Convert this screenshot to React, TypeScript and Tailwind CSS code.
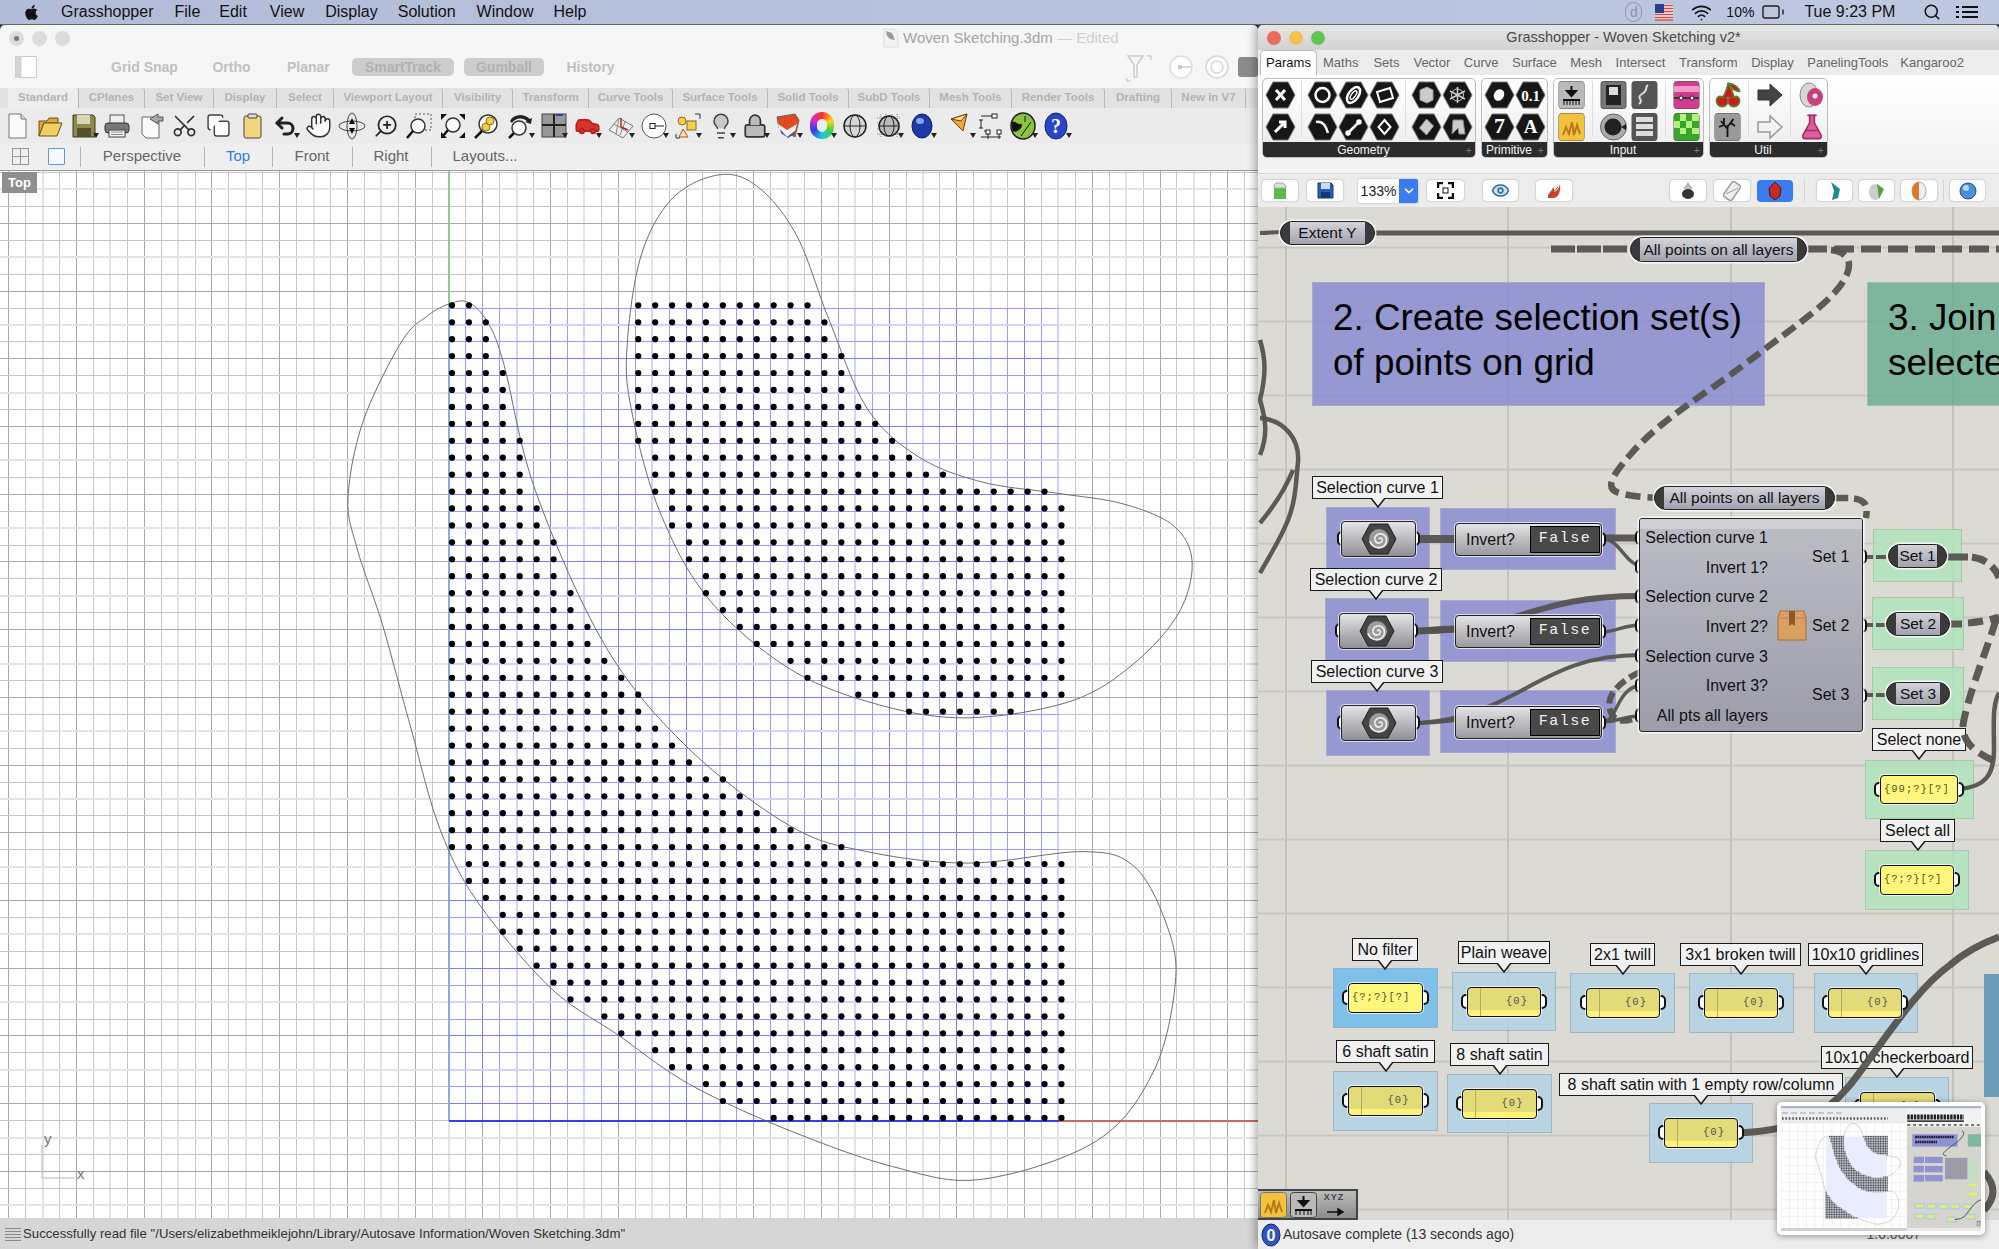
import type { ReactNode } from "react";
import { FaApple } from "react-icons/fa";
import {
  Battery,
  Car,
  Cherry,
  ChevronDown,
  Copy,
  Eye,
  FlaskConical,
  Hand,
  Lightbulb,
  Lock,
  Scissors,
  Search,
  Undo2,
  Wifi,
  ZoomIn,
} from "lucide-react";

/* ---------- viewport geometry ---------- */

type Pt = [number, number];
const SCALE = 1999 / 1568;
const STEP = 16.93;

const rawCurveA: Pt[] = [
  [352, 238.5], [367, 237], [382, 252], [395, 285], [420, 385], [475, 507], [540, 587], [620, 648], [680, 668],
  [760, 677], [850, 668], [890, 680], [915, 725], [922, 770], [905, 840], [860, 895], [770, 925],
  [700, 915], [615, 885], [540, 850], [485, 812], [432, 775], [375, 708], [345, 650], [322, 570],
  [300, 490], [280, 430], [273, 390], [285, 330], [315, 268], [335, 248],
];
const rawCurveB: Pt[] = [
  [565, 137], [595, 147], [625, 185], [650, 250], [680, 320], [720, 358], [770, 378], [830, 387],
  [880, 395], [920, 412], [935, 440], [925, 480], [890, 520], [840, 550], [760, 563], [690, 553],
  [620, 525], [556, 470], [517, 400], [495, 320], [492, 270], [503, 200], [528, 155],
];

function smooth(raw: Pt[]): Pt[] {
  const p = raw.map(([x, y]) => [x * SCALE, y * SCALE] as Pt);
  const out: Pt[] = [];
  const n = p.length;
  for (let i = 0; i < n; i++) {
    const [p0, p1, p2, p3] = [p[(i - 1 + n) % n], p[i], p[(i + 1) % n], p[(i + 2) % n]];
    for (let s = 0; s < 14; s++) {
      const t = s / 14;
      const f = (a: number, b: number, c: number, d: number) =>
        0.5 * (2 * b + (c - a) * t + (2 * a - 5 * b + 4 * c - d) * t * t + (3 * b - a - 3 * c + d) * t * t * t);
      out.push([f(p0[0], p1[0], p2[0], p3[0]), f(p0[1], p1[1], p2[1], p3[1])]);
    }
  }
  return out;
}

const curveA = smooth(rawCurveA);
const curveB = smooth(rawCurveB);
const toPoints = (c: Pt[]) => c.map(([x, y]) => `${x.toFixed(1)},${y.toFixed(1)}`).join(" ");

function inside(poly: Pt[], x: number, y: number) {
  let hit = false;
  for (let i = 0, j = poly.length - 1; i < poly.length; j = i++) {
    const [xi, yi] = poly[i];
    const [xj, yj] = poly[j];
    if (yi > y !== yj > y && x < ((xj - xi) * (y - yi)) / (yj - yi) + xi) hit = !hit;
  }
  return hit;
}

// dots inside either curve are the selection, the rest shows up in the preview thumbnail
const dots: Pt[] = [];
const otherDots: Pt[] = [];
for (let c = 0; c < 37; c++) {
  for (let r = 0; r < 49; r++) {
    const x = 452 + c * STEP;
    const y = 305.3 + r * STEP;
    if (inside(curveA, x, y) || inside(curveB, x, y)) dots.push([x, y]);
    else otherDots.push([x, y]);
  }
}

const range = (a: number, b: number) => Array.from({ length: b - a + 1 }, (_, i) => a + i);
const mod4 = (n: number) => ((n % 4) + 4) % 4;

function Viewport() {
  const gray = ["#e3e3e3", "#c6c6c6", "#a9a9a9", "#c6c6c6"];
  const blue = ["#d2d2ff", "#9c9cff", "#7c7cf6", "#9c9cff"];
  return (
    <svg className="block h-full w-full" viewBox="0 171 1258 1047">
      <rect x="0" y="171" width="1258" height="1047" fill="#ffffff" />
      <g shapeRendering="crispEdges">
        {range(-27, 48).map((k) => {
          const m = mod4(k);
          return <line key={k} x1={449 + k * STEP} x2={449 + k * STEP} y1="171" y2="1218" stroke={gray[m]} strokeWidth={m === 0 ? 2 : 1} />;
        })}
        {range(-8, 54).map((j) => {
          const m = mod4(j - 1);
          return <line key={j} y1={308 + j * STEP} y2={308 + j * STEP} x1="0" x2="1258" stroke={gray[m]} strokeWidth={m === 0 ? 2 : 1} />;
        })}
        {range(0, 36).map((k) => {
          const m = mod4(k);
          return <line key={k} x1={449 + k * STEP} x2={449 + k * STEP} y1="308" y2="1121" stroke={blue[m]} strokeWidth={m === 0 ? 2 : 1} />;
        })}
        {range(0, 48).map((j) => {
          const m = mod4(j - 1);
          return <line key={j} y1={308 + j * STEP} y2={308 + j * STEP} x1="449" x2="1058.5" stroke={blue[m]} strokeWidth={m === 0 ? 2 : 1} />;
        })}
        <line x1="449" x2="449" y1="171" y2="304" stroke="#8fca8f" strokeWidth="2" />
        <line x1="449" x2="449" y1="304" y2="1121" stroke="#8fa9dc" strokeWidth="2" />
        <line x1="449" x2="1059" y1="1121" y2="1121" stroke="#3a3aee" strokeWidth="1.5" />
        <line x1="1059" x2="1258" y1="1121" y2="1121" stroke="#c96a6a" strokeWidth="1.5" />
      </g>
      <polygon points={toPoints(curveA)} fill="none" stroke="#6d6d6d" strokeWidth="1" />
      <polygon points={toPoints(curveB)} fill="none" stroke="#6d6d6d" strokeWidth="1" />
      {dots.map(([x, y]) => (
        <circle key={`${x}-${y}`} cx={x} cy={y} r="3.1" fill="#000" />
      ))}
      {/* world axes icon */}
      <path d="M42 1145V1178H74" fill="none" stroke="#cdcdcd" strokeWidth="1.5" />
      <text x="44" y="1144" fontSize="15" fill="#777" fontFamily="Liberation Sans, sans-serif">y</text>
      <text x="77" y="1179" fontSize="15" fill="#777" fontFamily="Liberation Sans, sans-serif">x</text>
    </svg>
  );
}

/* ---------- rhino toolbar icons ---------- */

function Drop() {
  return <span className="absolute bottom-[5px] right-[2px] h-0 w-0 border-x-[3.5px] border-t-[5px] border-x-transparent border-t-[#222]" />;
}

function Tool({ children, drop, cls }: { children: ReactNode; drop?: boolean; cls?: string }) {
  return (
    <div className={`relative flex h-[35px] w-[33.55px] shrink-0 items-center justify-center ${cls ?? ""}`}>
      {children}
      {drop && <Drop />}
    </div>
  );
}

const S = ({ children }: { children: ReactNode }) => (
  <svg width="28" height="28" viewBox="0 0 28 28">{children}</svg>
);

const rhinoTools: { icon: ReactNode; drop?: boolean; cls?: string }[] = [
  { icon: <S><path d="M6 2h12l5 5v19H6z" fill="#fafafa" stroke="#777" /><path d="M18 2v5h5" fill="#ddd" stroke="#777" /></S> },
  { icon: <S><path d="M3 9h8l2-3h9v5H8L3 24z" fill="#d9a93c" stroke="#6b5212" /><path d="M8 11h18l-5 13H3z" fill="#f2cf62" stroke="#6b5212" /></S> },
  { icon: <S><path d="M3 3h20l2 2v20H3z" fill="#8d8a4c" stroke="#3c3a18" /><rect x="7" y="3" width="13" height="9" fill="#d7d6b5" /><rect x="7" y="16" width="14" height="9" fill="#55522a" /></S>, drop: true },
  { icon: <S><rect x="7" y="3" width="14" height="10" fill="#eee" stroke="#555" /><rect x="2" y="11" width="24" height="10" rx="3" fill="#777" stroke="#333" /><rect x="6" y="18" width="16" height="7" fill="#f4f4f4" stroke="#444" /><path d="M8 20h12M8 22.500h12" stroke="#888" /></S> },
  { icon: <S><path d="M5 5h13l4 4v17H9l-4-4z" fill="#fafafa" stroke="#666" /><path d="M13 7l8-5v3h5v4h-5v3z" fill="#aaa" stroke="#555" /></S> },
  { icon: <Scissors size={27} color="#333" strokeWidth={1.5} className="-rotate-90" /> },
  { icon: <Copy size={25} color="#444" strokeWidth={1.4} fill="#fff" /> },
  { icon: <S><rect x="6" y="4" width="17" height="22" rx="2" fill="#f4d57f" stroke="#444" /><rect x="10" y="2" width="9" height="4" rx="1" fill="#ddd" stroke="#444" /></S> },
  { icon: <Undo2 size={24} color="#222" strokeWidth={3} />, drop: true },
  { icon: <Hand size={27} color="#333" strokeWidth={1.3} fill="#fff" /> },
  { icon: <S><ellipse cx="14" cy="14" rx="13" ry="5" fill="none" stroke="#444" /><ellipse cx="14" cy="14" rx="5" ry="13" fill="none" stroke="#444" /><path d="M14 6l-3 6h6zM14 22l-3-6h6z" fill="#111" /></S> },
  { icon: <ZoomIn size={26} color="#222" strokeWidth={1.6} className="-scale-x-100" /> },
  { icon: <S><rect x="10" y="2" width="16" height="16" fill="none" stroke="#555" strokeDasharray="2 2" /><circle cx="13" cy="14" r="7" fill="#fff" stroke="#333" strokeWidth="1.5" /><path d="M8 19l-6 7" stroke="#111" strokeWidth="2.500" /></S> },
  { icon: <S><circle cx="14" cy="13" r="7" fill="#fff" stroke="#333" strokeWidth="1.5" /><path d="M9 18l-5 6" stroke="#111" strokeWidth="2.500" /><path d="M2 2h6L2 8zM26 2h-6l6 6zM26 26h-6l6-6zM2 26h6l-6-6z" fill="#111" /></S> },
  { icon: <S><circle cx="16" cy="12" r="9" fill="#fff" stroke="#333" strokeWidth="1.5" /><circle cx="14" cy="15" r="4" fill="#f2d04e" stroke="#8a6d12" /><circle cx="18" cy="9" r="4" fill="#f2d04e" stroke="#8a6d12" /><path d="M10 19l-7 7" stroke="#111" strokeWidth="2.500" /></S> },
  { icon: <S><circle cx="13" cy="16" r="7" fill="#fff" stroke="#333" strokeWidth="1.5" /><path d="M8 21l-5 5" stroke="#111" strokeWidth="2.500" /><path d="M4 9c4-7 13-8 20-2l2-1-1 6-6-2 2-1C16 5 9 6 6 11z" fill="#222" /></S>, drop: true },
  { icon: <S><rect x="2" y="2" width="24" height="23" fill="#999" stroke="#444" /><path d="M14 2v23M2 13h24" stroke="#222" strokeWidth="2" /><rect x="16" y="2" width="7" height="2" fill="#2a3bbb" /></S>, drop: true },
  { icon: <Car size={27} color="#b8201c" fill="#d6352e" strokeWidth={1.4} />, drop: true },
  { icon: <S><path d="M2 18L12 6l14 8-10 12z" fill="#eee" stroke="#777" /><path d="M7 12l14 8M12 6l-3 16M18 10l-5 13" stroke="#888" /><path d="M14 15V6M14 15l7 3" stroke="#b22" strokeWidth="1.5" /></S>, drop: true },
  { icon: <S><circle cx="14" cy="14" r="12" fill="#fff" stroke="#555" /><rect x="10" y="11.500" width="5" height="5" fill="#fff" stroke="#222" /><path d="M15 14h9" stroke="#222" /></S>, drop: true },
  { icon: <S><circle cx="8" cy="9" r="4" fill="#f5d04c" stroke="#8a6d12" /><rect x="13" y="9" width="9" height="9" fill="#f5d04c" stroke="#8a6d12" /><path d="M9 17l5 8H5z" fill="#f6e0b0" stroke="#b3521c" /><path d="M21 2h5v5M2 22v4h4" fill="none" stroke="#333" /></S>, drop: true },
  { icon: <Lightbulb size={28} color="#444" fill="#c8c8c8" strokeWidth={1.3} />, drop: true },
  { icon: <Lock size={26} color="#333" fill="#bbb" strokeWidth={1.6} />, drop: true },
  { icon: <S><path d="M3 5l18-3 4 6-4 17L5 16z" fill="#e04a20" stroke="#666" /><path d="M4 12l9 6 10-6-2 7-8 6-8-7z" fill="#f4f4f4" /><path d="M6 17l7 8 8-6-1 3-6 4-7-5z" fill="#2d4fb5" /></S>, drop: true },
  { icon: <div className="relative h-[27px] w-[24px] rounded-full bg-[conic-gradient(#ff2d2d,#ffd21f,#3fd23f,#22c8e6,#2d3fe0,#d02dd0,#ff2d2d)]"><div className="absolute inset-[7px] rounded-full bg-[#ececec]" /></div>, drop: true },
  { icon: <S><circle cx="14" cy="14" r="11" fill="#d6d6d6" stroke="#222" strokeWidth="1.500" /><ellipse cx="14" cy="14" rx="5" ry="11" fill="none" stroke="#222" /><path d="M3 14h22" stroke="#222" /></S> },
  { icon: <S><path d="M2 6h24M2 11h24M2 17h24M2 22h24M6 2v24M11 2v24M17 2v24M22 2v24" stroke="#888" strokeDasharray="1 1" /><circle cx="14" cy="14" r="10" fill="#bbb" stroke="#222" strokeWidth="1.5" /><ellipse cx="14" cy="14" rx="5" ry="10" fill="none" stroke="#222" /><path d="M4 14h20" stroke="#222" /></S>, drop: true },
  { icon: <S><ellipse cx="13" cy="14" rx="10" ry="12" fill="#1d3aa8" stroke="#0d1c5c" /><ellipse cx="11" cy="9" rx="4" ry="3" fill="#8aa3f0" /></S>, drop: true },
  { icon: <S><path d="M4 7l16-5-4 17z" fill="#f5a33a" stroke="#6b4412" /><path d="M4 7l10 2 6-7z" fill="#fde0a0" stroke="#6b4412" /></S>, drop: true, cls: "ml-[5px]" },
  { icon: <S><rect x="16" y="2" width="5" height="4" fill="#fff" stroke="#222" /><path d="M16 4H5M5 8v8M3 8h4M3 16h4M8 19h4v4" fill="none" stroke="#222" /><rect x="10" y="18" width="4" height="4" fill="#fff" stroke="#222" /><rect x="21" y="18" width="4" height="4" fill="#fff" stroke="#222" /><path d="M12 22v5M23 22v5M5 25h20" stroke="#222" /></S>, cls: "-ml-[5px]" },
  { icon: <S><ellipse cx="14" cy="14" rx="12" ry="13" fill="#8ac43f" stroke="#222" strokeWidth="1.5" /><path d="M3 10c5 0 6 4 9 2 2 3-3 8-8 7zM12 24l10-14M16 4v6" fill="#111" stroke="#111" /></S>, drop: true },
  { icon: <S><ellipse cx="13" cy="14" rx="11" ry="13" fill="#2746c8" stroke="#14246a" /><text x="13" y="21" textAnchor="middle" fontSize="20" fontWeight="700" fill="#fff" fontFamily="Liberation Serif, serif">?</text></S>, drop: true },
];

const rhinoTabs = [
  { label: "Standard", w: "w-[71px] bg-[#ededed]" },
  { label: "CPlanes", w: "w-[66px]" },
  { label: "Set View", w: "w-[69px]" },
  { label: "Display", w: "w-[63px]" },
  { label: "Select", w: "w-[57px]" },
  { label: "Viewport Layout", w: "w-[109px]" },
  { label: "Visibility", w: "w-[70px]" },
  { label: "Transform", w: "w-[76px]" },
  { label: "Curve Tools", w: "w-[84px]" },
  { label: "Surface Tools", w: "w-[95px]" },
  { label: "Solid Tools", w: "w-[81px]" },
  { label: "SubD Tools", w: "w-[81px]" },
  { label: "Mesh Tools", w: "w-[82px]" },
  { label: "Render Tools", w: "w-[93px]" },
  { label: "Drafting", w: "w-[67px]" },
  { label: "New in V7", w: "w-[74px]" },
];

function RhinoWindow() {
  const sep = <span className="block h-[20px] w-px bg-[#b5b5b5]" />;
  return (
    <div className="relative flex h-full w-[1258px] shrink-0 flex-col overflow-hidden rounded-t-[5px] bg-[#f6f6f6]">
      {/* title */}
      <div className="relative flex h-[26px] shrink-0 items-center pl-[9px]">
        <span className="flex h-[15px] w-[15px] items-center justify-center rounded-full bg-[#dcdcdc]">
          <span className="h-[5px] w-[5px] rounded-full bg-[#777]" />
        </span>
        <span className="ml-[8px] h-[15px] w-[15px] rounded-full bg-[#dcdcdc]" />
        <span className="ml-[8px] h-[15px] w-[15px] rounded-full bg-[#dcdcdc]" />
        <svg className="ml-[813px]" width="16" height="20" viewBox="0 0 16 20">
          <path d="M1 1h10l4 4v14H1z" fill="#f3f3f3" stroke="#ddd" />
          <path d="M3 3l6 2 3 7-5-1-3-3z" fill="#999" />
        </svg>
        <span className="ml-[4px] whitespace-nowrap text-[15px] text-[#a3a3a3]">
          Woven Sketching.3dm <span className="text-[#cfcfcf]">— Edited</span>
        </span>
      </div>
      {/* status buttons */}
      <div className="flex h-[37px] shrink-0 items-center pb-[5px] text-[14px] font-bold text-[#c0c0c0]">
        <svg className="ml-[15px]" width="22" height="22" viewBox="0 0 22 22">
          <rect x="0.500" y="0.500" width="21" height="21" fill="#fff" stroke="#ccc" />
          <rect x="0.500" y="0.500" width="6" height="21" fill="#d4d4d4" />
        </svg>
        <span className="ml-[74px] w-[66px] whitespace-nowrap text-center">Grid Snap</span>
        <span className="ml-[35px] w-[39px] text-center">Ortho</span>
        <span className="ml-[36px] w-[42px] text-center">Planar</span>
        <span className="ml-[23px] flex h-[18px] w-[102px] items-center justify-center rounded-[5px] bg-[#cdcdcd] text-[#b2b2b2]">SmartTrack</span>
        <span className="ml-[10px] flex h-[18px] w-[80px] items-center justify-center rounded-[5px] bg-[#cdcdcd] text-[#b2b2b2]">Gumball</span>
        <span className="ml-[22px] w-[49px] text-center">History</span>
        <svg className="ml-[510px]" width="28" height="30" viewBox="0 0 28 30">
          <path d="M3 4h15l-6 9v12h-3V13z" fill="none" stroke="#ccc" strokeWidth="1.5" />
          <path d="M22 4h4v4M2 26v3h3" fill="none" stroke="#bbb" />
        </svg>
        <svg className="ml-[15px]" width="26" height="26" viewBox="0 0 26 26">
          <circle cx="13" cy="13" r="11" fill="#fff" stroke="#ddd" strokeWidth="1.5" />
          <rect x="10" y="11" width="4" height="4" fill="#ccc" />
          <path d="M14 13h9" stroke="#ccc" strokeWidth="1.5" />
        </svg>
        <svg className="ml-[10px]" width="26" height="26" viewBox="0 0 26 26">
          <circle cx="13" cy="13" r="11" fill="#fff" stroke="#d5d5d5" strokeWidth="1.5" />
          <circle cx="13" cy="13" r="6" fill="none" stroke="#d5d5d5" strokeWidth="1.5" />
        </svg>
        <span className="ml-[8px] h-[20px] w-[20px] rounded-[3px] bg-[#8c8c8c]" />
      </div>
      {/* toolbar tabs */}
      <div className="flex h-[20px] shrink-0 bg-[#e2e2e2] pl-[8px] text-[11.5px] font-bold text-[#b3b3b3]">
        {rhinoTabs.map((t) => (
          <span
            key={t.label}
            className={`flex items-center justify-center whitespace-nowrap rounded-t-[3px] border-r border-[#b9b9b9] ${t.w}`}
          >
            {t.label}
          </span>
        ))}
      </div>
      {/* icon row */}
      <div className="flex h-[35px] shrink-0 items-center bg-[#ebebeb]">
        {rhinoTools.map((t, i) => (
          <Tool key={i} drop={t.drop} cls={t.cls}>{t.icon}</Tool>
        ))}
      </div>
      {/* viewport tabs */}
      <div className="flex h-[28px] shrink-0 items-center border-b border-[#9a9a9a] bg-[#efefef] text-[15px] text-[#666]">
        <svg className="ml-[12px]" width="17" height="17" viewBox="0 0 17 17">
          <rect x="0.500" y="0.500" width="16" height="16" fill="none" stroke="#999" />
          <path d="M8.500 0v17M0 8.500h17" stroke="#999" />
        </svg>
        <span className="ml-[19px] h-[17px] w-[17px] rounded-[1px] border border-[#5a96e8] bg-[#f6f9ff]" />
        <span className="ml-[15px]">{sep}</span>
        <span className="ml-[21px] w-[80px] whitespace-nowrap text-center">Perspective</span>
        <span className="ml-[22px]">{sep}</span>
        <span className="ml-[20px] w-[26px] text-center text-[#2f7de6]">Top</span>
        <span className="ml-[21px]">{sep}</span>
        <span className="ml-[21px] w-[36px] text-center">Front</span>
        <span className="ml-[22px]">{sep}</span>
        <span className="ml-[20px] w-[36px] text-center">Right</span>
        <span className="ml-[22px]">{sep}</span>
        <span className="ml-[20px] w-[66px] whitespace-nowrap text-center">Layouts...</span>
      </div>
      {/* viewport */}
      <div className="relative h-[1047px] shrink-0">
        <Viewport />
        <span className="absolute left-[2px] top-[1px] flex h-[21px] w-[35px] items-center justify-center bg-[#8f8f8f] text-[13px] font-bold text-white">
          Top
        </span>
      </div>
      {/* command status */}
      <div className="flex flex-1 items-center bg-[#d6d6d6] text-[13.2px] text-[#333]">
        <svg className="ml-[5px] mr-[2px]" width="16" height="14" viewBox="0 0 16 14">
          <path d="M0 1.500h16M0 4.500h16M0 7.500h16M0 10.500h16M0 13.500h16" stroke="#8a8a8a" />
        </svg>
        <span className="whitespace-nowrap">
          Successfully read file "/Users/elizabethmeiklejohn/Library/Autosave Information/Woven Sketching.3dm"
        </span>
      </div>
    </div>
  );
}

/* ---------- grasshopper ribbon ---------- */

function Hex({ children }: { children?: ReactNode }) {
  return (
    <svg width="31" height="28" viewBox="0 0 31 28">
      <polygon points="8,1 23,1 30,14 23,27 8,27 1,14" fill="#161616" stroke="#777" strokeWidth="1" />
      <g fill="none" stroke="#fff" strokeWidth="2.500">{children}</g>
    </svg>
  );
}

function Sq({ children }: { children: ReactNode }) {
  return (
    <svg width="31" height="28" viewBox="0 0 31 28">
      <rect x="3" y="0.500" width="25" height="27" rx="2.500" fill="#777" stroke="#555" />
      {children}
    </svg>
  );
}

const Col = ({ children }: { children: ReactNode }) => (
  <div className="flex w-[31px] flex-col gap-[4px]">{children}</div>
);
const Sep = () => <div className="mx-[5px] h-[56px] w-px bg-[#dedede]" />;

function Section({ w, label, children }: { w: string; label: string; children: ReactNode }) {
  return (
    <div className={`flex h-[80px] shrink-0 flex-col overflow-hidden rounded-[5px] border border-[#bdbdbd] bg-linear-to-b from-[#ffffff] to-[#ebebeb] ${w}`}>
      <div className="flex flex-1 pl-[2px] pt-[2px]">{children}</div>
      <div className="relative flex h-[15px] items-center justify-center bg-[#2c2c2c] pr-[11px] text-[12px] text-[#f2f2f2]">
        {label}
        <span className="absolute right-[3px] top-[3px] text-[11px] leading-[10px] text-[#777]">+</span>
      </div>
    </div>
  );
}

const T = ({ c, s = 15 }: { c: string; s?: number }) => (
  <text x="15.500" y="20" textAnchor="middle" fontSize={s} fontWeight="700" fill="#fff" stroke="none" fontFamily="Liberation Serif, serif">{c}</text>
);

function Ribbon() {
  return (
    <div className="flex h-[86px] shrink-0 gap-[5px] bg-linear-to-b from-[#ffffff] to-[#f3f3f3] pl-[4px] pt-[3px]">
      <Section w="w-[214px]" label="Geometry">
        <Col>
          <Hex><path d="M11 9l9 10M20 9l-9 10" strokeWidth="3" /></Hex>
          <Hex><path d="M10 19l10-10M14 9h6v6" strokeWidth="3" /></Hex>
        </Col>
        <Sep />
        <Col>
          <Hex><circle cx="15.500" cy="14" r="7" /></Hex>
          <Hex><path d="M9 9c7-2 10 4 12 11" /></Hex>
        </Col>
        <Col>
          <Hex><ellipse cx="15.500" cy="14" rx="5" ry="9" transform="rotate(35 15.500 14)" /><ellipse cx="15.500" cy="14" rx="2" ry="5" transform="rotate(35 15.500 14)" strokeWidth="1.5" /></Hex>
          <Hex><path d="M10 20L21 9" /><circle cx="10" cy="20" r="1.500" /><circle cx="21" cy="9" r="1.500" /></Hex>
        </Col>
        <Col>
          <Hex><path d="M8 11l13-4 3 10-13 4z" strokeWidth="2" /></Hex>
          <Hex><path d="M15.500 7l6 7-6 7-6-7z" strokeWidth="2" /></Hex>
        </Col>
        <Sep />
        <Col>
          <Hex><path d="M9 9l7-3 6 3v10l-6 3-7-3z" fill="#ccc" stroke="#999" strokeWidth="1" /></Hex>
          <Hex><path d="M15.500 6l7 7-7 9-7-7z" fill="#ccc" stroke="#999" strokeWidth="1" /></Hex>
        </Col>
        <Col>
          <Hex><path d="M15.500 6v16M8 10l15 8M23 10L8 18" stroke="#ccc" strokeWidth="1.5" /><circle cx="15.500" cy="14" r="6" stroke="#ccc" strokeWidth="1" /></Hex>
          <Hex><path d="M11 7h10l2 14h-6l-1-6-6 6z" fill="#ccc" stroke="#888" strokeWidth="1" /></Hex>
        </Col>
      </Section>
      <Section w="w-[67px]" label="Primitive">
        <Col>
          <Hex><ellipse cx="15" cy="14" rx="5" ry="6" fill="#fff" stroke="none" transform="rotate(30 15 14)" /></Hex>
          <Hex><T c="7" s={22} /></Hex>
        </Col>
        <Col>
          <Hex><T c="0.1" s={15} /></Hex>
          <Hex><T c="A" s={19} /></Hex>
        </Col>
      </Section>
      <Section w="w-[151px]" label="Input">
        <Col>
          <Sq><rect x="3" y="0.500" width="25" height="27" rx="2.500" fill="#b9b9b9" /><path d="M15.500 5v9M11 10l4.500 5 4.500-5zM7 19h17" stroke="#111" strokeWidth="2" /><path d="M8 20v4M11 20v4M14 20v4M17 20v4M20 20v4M23 20v4" stroke="#111" /></Sq>
          <Sq><rect x="3" y="0.500" width="25" height="27" rx="2.500" fill="#f3c33e" /><path d="M7 22l3-8 3 7 3-12 2 13 3-10 3 9" fill="none" stroke="#b8791a" strokeWidth="2" /></Sq>
        </Col>
        <Sep />
        <Col>
          <Sq><rect x="8" y="4" width="15" height="20" fill="#222" /><rect x="11" y="6" width="9" height="8" fill="#ddd" /></Sq>
          <svg width="31" height="28" viewBox="0 0 31 28"><circle cx="15.500" cy="14" r="13" fill="#aaa" stroke="#666" /><circle cx="15" cy="14" r="8.500" fill="#222" /><path d="M23 14l5-3v6z" fill="#222" /></svg>
        </Col>
        <Col>
          <Sq><rect x="3" y="0.500" width="25" height="27" rx="2.500" fill="#555" /><path d="M10 23c6-4-4-6 3-10s2-6 6-9" fill="none" stroke="#ddd" strokeWidth="2" /></Sq>
          <Sq><rect x="3" y="0.500" width="25" height="27" rx="2.500" fill="#555" /><rect x="7" y="4" width="17" height="5" fill="#ddd" /><rect x="7" y="11" width="17" height="5" fill="#ddd" /><rect x="7" y="18" width="17" height="5" fill="#ddd" /></Sq>
        </Col>
        <Sep />
        <Col>
          <Sq><rect x="3" y="0.500" width="25" height="27" rx="2.500" fill="#d23c8c" /><rect x="3" y="5" width="25" height="6" fill="#f59ac6" /><path d="M3 17h25" stroke="#222" strokeWidth="1.5" /><circle cx="10" cy="17" r="2" fill="#fff" stroke="#222" /><circle cx="21" cy="17" r="2" fill="#fff" stroke="#222" /></Sq>
          <Sq><rect x="3" y="0.500" width="25" height="27" rx="2.500" fill="#3aa52c" /><rect x="9" y="1" width="6" height="7" fill="#b4f07c" /><rect x="21" y="1" width="7" height="7" fill="#b4f07c" /><rect x="15" y="8" width="6" height="7" fill="#b4f07c" /><rect x="3" y="8" width="6" height="7" fill="#b4f07c" /><rect x="9" y="15" width="6" height="6" fill="#b4f07c" /><rect x="21" y="15" width="7" height="6" fill="#b4f07c" /></Sq>
        </Col>
      </Section>
      <Section w="w-[119px]" label="Util">
        <Col>
          <div className="flex h-[28px] items-center justify-center"><Cherry size={28} color="#4c8a2a" fill="#d3161c" strokeWidth={1.4} /></div>
          <Sq><rect x="3" y="0.500" width="25" height="27" rx="2.500" fill="#9a9a9a" /><path d="M15.500 24V12M15.500 16L9 8M15.500 14l6-8M12 12L7 14M19 10l4 3M12 11V5" stroke="#111" strokeWidth="1.8" /></Sq>
        </Col>
        <Sep />
        <Col>
          <svg width="31" height="28" viewBox="0 0 31 28"><path d="M4 9h12V3l12 11-12 11v-6H4z" fill="#444" stroke="#333" /></svg>
          <svg width="31" height="28" viewBox="0 0 31 28"><path d="M4 9h12V3l12 11-12 11v-6H4z" fill="#f2f2f2" stroke="#999" strokeWidth="1.5" /></svg>
        </Col>
        <Sep />
        <Col>
          <svg width="31" height="28" viewBox="0 0 31 28"><ellipse cx="13" cy="14" rx="9" ry="12" fill="#d6d6d6" stroke="#888" /><ellipse cx="19" cy="16" rx="8" ry="9" fill="#c8407e" /><circle cx="19" cy="15" r="2.500" fill="#eee" /></svg>
          <div className="flex h-[28px] items-center justify-center"><FlaskConical size={28} color="#a03068" fill="#e05c9c" strokeWidth={1.4} /></div>
        </Col>
      </Section>
    </div>
  );
}

function GhButton({ cls, children }: { cls: string; children: ReactNode }) {
  return (
    <div className={`flex h-[21px] items-center justify-center rounded-[4px] bg-white shadow-[0_0_2px_rgba(0,0,0,0.35)] ${cls}`}>
      {children}
    </div>
  );
}

function GhToolbar() {
  return (
    <div className="flex h-[34px] shrink-0 items-center border-t border-[#d8d8d8] bg-[#ececec] text-[14px] text-[#222]">
      <GhButton cls="ml-[4px] w-[36px]">
        <svg width="14" height="18" viewBox="0 0 14 18"><path d="M1 6h12v11H1z" fill="#5cb848" /><path d="M3 1h7l3 3v2H1V3z" fill="#ddd" stroke="#aaa" /></svg>
      </GhButton>
      <GhButton cls="ml-[9px] w-[36px]">
        <svg width="17" height="17" viewBox="0 0 17 17"><path d="M1 1h13l2 2v13H1z" fill="#2b5bb5" stroke="#163672" /><rect x="4" y="1" width="9" height="6" fill="#cdd9ef" /><rect x="4" y="10" width="9" height="6" fill="#163672" /></svg>
      </GhButton>
      <div className="ml-[15px] flex h-[24px] w-[60px] overflow-hidden rounded-[2px] bg-white shadow-[0_0_2px_rgba(0,0,0,0.3)]">
        <span className="flex-1 text-center leading-[24px]">133%</span>
        <span className="flex w-[19px] items-center justify-center bg-[#3a7bf2]">
          <ChevronDown size={14} color="#fff" strokeWidth={3} />
        </span>
      </div>
      <GhButton cls="ml-[9px] w-[37px]">
        <svg width="17" height="17" viewBox="0 0 17 17"><path d="M1 6V1h5M11 1h5v5M16 11v5h-5M6 16H1v-5" fill="none" stroke="#111" strokeWidth="2.500" /><rect x="6" y="6" width="5" height="5" fill="#fff" stroke="#111" /></svg>
      </GhButton>
      <GhButton cls="ml-[19px] w-[35px]">
        <Eye size={19} color="#2d6f9c" strokeWidth={2} fill="#cde2ee" />
      </GhButton>
      <GhButton cls="ml-[18px] w-[36px]">
        <svg width="18" height="18" viewBox="0 0 18 18"><path d="M3 16c-1-5 4-6 5-11 2 2 1 4 1 5 3-1 5-4 6-8 1 6-1 14-7 14z" fill="#d8402a" /><path d="M3 16L13 5" stroke="#555" /></svg>
      </GhButton>
      <GhButton cls="ml-[98px] w-[36px]">
        <svg width="16" height="20" viewBox="0 0 16 20"><path d="M8 1l5 7H3z" fill="#bbb" /><ellipse cx="8" cy="13" rx="6" ry="5" fill="#333" /></svg>
      </GhButton>
      <GhButton cls="ml-[8px] w-[36px]">
        <svg width="18" height="20" viewBox="0 0 18 20"><rect x="4" y="1" width="10" height="18" rx="2" transform="rotate(35 9 10)" fill="#eee" stroke="#999" strokeWidth="1.5" /><path d="M3 13L15 7" stroke="#999" /></svg>
      </GhButton>
      <div className="ml-[7px] flex h-[22px] w-[36px] items-center justify-center rounded-[4px] bg-[#3a7bf2]">
        <svg width="17" height="20" viewBox="0 0 17 20"><path d="M8 1l6 6-1 8-5 4-5-4-1-8z" fill="#c42a22" stroke="#5a100c" /></svg>
      </div>
      <span className="ml-[11px] h-[22px] w-px bg-[#d4d4d4]" />
      <GhButton cls="ml-[12px] w-[35px]">
        <svg width="16" height="20" viewBox="0 0 16 20"><path d="M4 1l9 7-2 9-6 2 2-9z" fill="#1f8a95" /></svg>
      </GhButton>
      <GhButton cls="ml-[7px] w-[35px]">
        <svg width="18" height="20" viewBox="0 0 18 20"><ellipse cx="7" cy="11" rx="6" ry="8" fill="#ccc" /><path d="M9 3l7 5-5 10z" fill="#57a13c" /></svg>
      </GhButton>
      <GhButton cls="ml-[7px] w-[36px]">
        <svg width="16" height="20" viewBox="0 0 16 20"><ellipse cx="8" cy="10" rx="7" ry="9" fill="#eee" stroke="#aaa" /><path d="M8 1c-4 0-7 4-7 9s3 9 7 9z" fill="#d97b28" /></svg>
      </GhButton>
      <span className="ml-[6px] h-[22px] w-px bg-[#d4d4d4]" />
      <GhButton cls="ml-[6px] w-[35px]">
        <svg width="18" height="18" viewBox="0 0 18 18"><circle cx="9" cy="9" r="8" fill="#4a90d9" stroke="#1f4f8a" /><circle cx="7" cy="6" r="3" fill="#b7d8f5" /></svg>
      </GhButton>
    </div>
  );
}

/* ---------- grasshopper canvas ---------- */

const hLines = range(0, 13).map((i) => 247.5 + i * 74);
const vLines = [1286, 1508, 1731, 1953];

type Wire = { d: string; w: number; dash?: string };
const wires: Wire[] = [
  { d: "M1260 233C1270 233 1272 232 1282 232", w: 4 },
  { d: "M1375 233H1999", w: 5 },
  { d: "M1551 249H1632", w: 7, dash: "24 2" },
  { d: "M1807 249H1999", w: 7, dash: "20 7" },
  { d: "M1831 250C1848 252 1852 262 1847 274C1838 298 1800 322 1745 364C1700 398 1660 420 1630 455C1612 476 1602 490 1623 494C1632 496 1642 497 1656 498", w: 6.5, dash: "15 7" },
  { d: "M1260 340C1266 360 1266 375 1260 400C1266 420 1268 435 1260 455", w: 4.5 },
  { d: "M1260 418C1285 420 1300 440 1298 462C1296 480 1296 500 1288 520C1280 540 1270 555 1260 573", w: 4.5 },
  { d: "M1293 470C1285 490 1275 505 1260 523", w: 4.5 },
  { d: "M1415 539H1456", w: 8 },
  { d: "M1414 631C1430 631 1440 629 1456 629", w: 7 },
  { d: "M1415 723C1430 723 1440 722 1456 720", w: 4 },
  { d: "M1602 538H1640", w: 7 },
  { d: "M1602 538C1620 540 1624 562 1640 566", w: 3.5 },
  { d: "M1420 631C1520 631 1530 596 1640 596", w: 6 },
  { d: "M1602 632C1615 632 1625 625 1640 625", w: 3.5 },
  { d: "M1420 723C1520 715 1540 655 1640 655", w: 4 },
  { d: "M1602 722C1618 722 1615 690 1640 685", w: 3.5 },
  { d: "M1602 722C1620 722 1622 716 1640 716", w: 3.5 },
  { d: "M1640 672C1622 680 1605 695 1610 710C1613 722 1625 724 1640 716", w: 6, dash: "12 5" },
  { d: "M1834 498C1850 498 1860 497 1865 504C1867 508 1867 512 1866 518", w: 6.5, dash: "14 6" },
  { d: "M1863 557H1888", w: 4, dash: "10 3" },
  { d: "M1947 557H1968", w: 7 },
  { d: "M1972 557C1985 559 1995 566 1999 578", w: 7, dash: "15 7" },
  { d: "M1863 625H1886", w: 4, dash: "10 3" },
  { d: "M1950 624H1962", w: 7 },
  { d: "M1968 623C1980 622 1990 620 1999 617", w: 7, dash: "15 7" },
  { d: "M1996 620C1985 655 1968 695 1963 725C1962 745 1980 755 1999 763", w: 7, dash: "16 8" },
  { d: "M1959 789C1985 787 1994 775 1994 750C1994 725 1992 705 1999 693", w: 4.5 },
  { d: "M1863 695H1886", w: 4, dash: "10 3" },
  { d: "M1738 1133C1800 1130 1825 1115 1850 1085C1885 1040 1915 990 1950 965C1965 952 1985 942 1999 937", w: 7 },
  { d: "M1984 1172C1996 1185 1996 1198 1984 1210", w: 7 },
];

function Port({ cls }: { cls: string }) {
  return <span className={`absolute h-[15px] w-[10px] rounded-full border-[2px] border-[#111] bg-white ${cls}`} />;
}

function Tooltip({ cls, text }: { cls: string; text: string }) {
  return (
    <div className={`absolute flex h-[23px] items-center justify-center whitespace-nowrap border-[1.5px] border-[#1a1a1a] bg-[#f1f1f1] text-[16px] text-[#111] ${cls}`}>
      {text}
      <svg className="absolute left-1/2 top-[20.500px] -translate-x-1/2" width="16" height="10" viewBox="0 0 16 10">
        <path d="M1 0L8 9L15 0" fill="#f1f1f1" stroke="#1a1a1a" strokeWidth="1.5" />
      </svg>
    </div>
  );
}

function Pill({ cls, text }: { cls: string; text: string }) {
  return (
    <div className={`absolute flex items-stretch overflow-hidden rounded-full border-[1.5px] border-[#222] bg-[#3a3a3a] shadow-[0_0_0_1.5px_rgba(255,255,255,0.8)] ${cls}`}>
      <span className="w-[9px] shrink-0" />
      <span className="flex flex-1 items-center justify-center whitespace-nowrap bg-linear-to-b from-[#d4d4da] to-[#a2a2ae] text-[15.5px] text-[#111]">
        {text}
      </span>
      <span className="w-[9px] shrink-0" />
    </div>
  );
}

function SpiralNode({ cls }: { cls: string }) {
  return (
    <div className={`absolute ${cls}`}>
      <Port cls="-left-[4px] top-[10px]" />
      <Port cls="-right-[4px] top-[10px]" />
      <div className="absolute inset-0 flex items-center justify-center rounded-[4px] border-[1.5px] border-[#222] bg-linear-to-b from-[#e6e6e8] to-[#8f8f95] shadow-[0_0_0_1px_rgba(255,255,255,0.7)]">
        <svg width="36" height="32" viewBox="0 0 36 32">
          <polygon points="9,1 27,1 35,16 27,31 9,31 1,16" fill="#444" stroke="#222" />
          <circle cx="18" cy="16" r="10" fill="#9b9b9b" />
          <path d="M18 16c2-2 4 0 3 2-1 3-6 3-7-1-1-5 5-8 9-5 4 3 3 10-2 12-5 2-11-1-12-6" fill="none" stroke="#eee" strokeWidth="1.6" />
        </svg>
      </div>
    </div>
  );
}

function ToggleNode({ cls }: { cls: string }) {
  return (
    <div className={`absolute ${cls}`}>
      <Port cls="-right-[4px] top-[9px]" />
      <div className="absolute inset-0 flex items-center justify-between rounded-[4px] border-[1.5px] border-[#222] bg-linear-to-b from-[#e4e4e6] to-[#9a9aa0] pl-[10px] pr-[1px] text-[16px] text-[#111] shadow-[0_0_0_1px_rgba(255,255,255,0.7)]">
        <span>Invert?</span>
        <span className="flex h-[27px] w-[70px] items-center justify-center border border-black bg-[#484848] font-['Liberation_Mono',monospace] text-[15px] tracking-[1.5px] text-[#f0f0f0]">
          False
        </span>
      </div>
    </div>
  );
}

function Panel({ cls, text = "{0}", bright }: { cls: string; text?: string; bright?: boolean }) {
  return (
    <div className={`absolute ${cls}`}>
      <Port cls="-left-[6px] top-[7px]" />
      <Port cls="-right-[6px] top-[7px]" />
      <div
        className={`absolute inset-0 flex items-center overflow-hidden rounded-[4px] border-[1.5px] border-[#111] font-['Liberation_Mono',monospace] text-[10.5px] tracking-[1px] text-[#555] shadow-[0_0_0_1px_rgba(255,255,255,0.7)] ${
          bright ? "bg-[#fff67c] pl-[3px] text-[#55532a]" : "justify-center bg-linear-to-b from-[#e3da78] via-[#e3da78] via-80% to-[#fff27a] to-80% pl-[26px]"
        }`}
      >
        {!bright && <span className="absolute bottom-0 left-[12px] top-0 w-px bg-[#b3ab60]" />}
        {text}
      </div>
    </div>
  );
}

const mainInputs = [
  "Selection curve 1",
  "Invert 1?",
  "Selection curve 2",
  "Invert 2?",
  "Selection curve 3",
  "Invert 3?",
  "All pts all layers",
];

function MainComponent() {
  return (
    <div className="absolute left-[381px] top-[311px] h-[214px] w-[224px]">
      <Port cls="-left-[4px] top-[12px]" />
      <Port cls="-left-[4px] top-[41px]" />
      <Port cls="-left-[4px] top-[71px]" />
      <Port cls="-left-[4px] top-[100px]" />
      <Port cls="-left-[4px] top-[130px]" />
      <Port cls="-left-[4px] top-[160px]" />
      <Port cls="-left-[4px] top-[190px]" />
      <Port cls="-right-[4px] top-[31px]" />
      <Port cls="-right-[4px] top-[100px]" />
      <Port cls="-right-[4px] top-[170px]" />
      <div className="absolute inset-0 flex overflow-hidden rounded-[3px] border-[1.5px] border-[#222] bg-linear-to-b from-[#bdbdc6] to-[#9d9daa] text-[16px] text-[#111] shadow-[0_0_0_1.5px_rgba(255,255,255,0.75)]">
        <div className="absolute inset-x-0 top-0 h-[10px] bg-[#cfcfd6]" />
        <div className="relative flex w-[128px] flex-col pt-[4px]">
          {mainInputs.map((t) => (
            <span key={t} className="flex h-[29.7px] items-center justify-end whitespace-nowrap">{t}</span>
          ))}
        </div>
        <div className="relative ml-[44px] flex flex-col pt-[3px]">
          {["Set 1", "Set 2", "Set 3"].map((t) => (
            <span key={t} className="flex h-[69px] items-center whitespace-nowrap">{t}</span>
          ))}
        </div>
        <svg className="absolute left-[137px] top-[91px]" width="30" height="31" viewBox="0 0 30 31">
          <path d="M3 1h24l2 7v22H1V8z" fill="#d9a062" stroke="#a87338" />
          <path d="M1 8h28" stroke="#b98346" />
          <path d="M12 1h6v15l-3-2-3 2z" fill="#8a5a2a" />
        </svg>
      </div>
    </div>
  );
}

// groups and panels of the canvas, repeated small in the preview
const thumbViolet = [
  [1326, 507, 104, 63], [1440, 508, 176, 62], [1325, 598, 104, 64], [1440, 600, 176, 62], [1326, 690, 104, 66], [1440, 690, 176, 63],
];
const thumbGreen = [
  [1873, 529, 89, 53], [1872, 597, 92, 53], [1872, 667, 92, 53], [1865, 760, 109, 59], [1865, 850, 104, 60],
];
const thumbBlue = [
  [1333, 968, 105, 60], [1452, 972, 104, 59], [1570, 973, 105, 60], [1689, 973, 105, 60], [1814, 973, 104, 60],
  [1333, 1071, 105, 60], [1447, 1074, 105, 59], [1649, 1103, 104, 60], [1845, 1077, 104, 60],
];
const thumbPanels = [
  [1880, 775, 78, 29], [1880, 865, 74, 30], [1348, 983, 75, 30], [1467, 987, 74, 30], [1586, 988, 74, 30], [1704, 988, 74, 30], [1828, 988, 74, 30],
  [1348, 1086, 75, 30], [1462, 1089, 75, 30], [1664, 1118, 74, 30], [1860, 1092, 75, 30],
];
const rects = (list: number[][], fill: string) =>
  list.map(([x, y, w, h]) => <rect key={`${x}-${y}`} x={x} y={y} width={w} height={h} fill={fill} />);

function Thumbnail() {
  return (
    <div className="absolute left-[519px] top-[1077px] h-[133px] w-[208px] rounded-[5px] bg-white p-[4px] shadow-[0_1px_6px_rgba(0,0,0,0.4)]">
      <svg className="h-full w-full" viewBox="0 0 1999 1249" preserveAspectRatio="none">
        <rect width="1999" height="1249" fill="#fff" />
        <rect width="1999" height="25" fill="#a9b3d2" />
        <rect y="25" width="1258" height="146" fill="#ededed" />
        <path d="M10 125H1070" stroke="#555" strokeWidth="26" strokeDasharray="16 18" />
        <path d="M10 70H620" stroke="#bbb" strokeWidth="14" strokeDasharray="60 30" />
        <g stroke="#e2e2e2" strokeWidth="5">
          {range(0, 14).map((i) => <line key={i} x1={i * 85} x2={i * 85} y1="171" y2="1218" />)}
          {range(0, 12).map((i) => <line key={i} y1={171 + i * 85} y2={171 + i * 85} x1="0" x2="1258" />)}
        </g>
        <rect x="449" y="308" width="610" height="813" fill="#e9edff" />
        {otherDots.map(([x, y]) => <rect key={`${x}-${y}`} x={x - 7} y={y - 7} width="13" height="13" fill="#4a4a4a" />)}
        <polygon points={toPoints(curveA)} fill="none" stroke="#b5b5b5" strokeWidth="6" />
        <polygon points={toPoints(curveB)} fill="none" stroke="#b5b5b5" strokeWidth="6" />
        <rect y="1218" width="1258" height="31" fill="#d0d0d0" />
        <rect x="1258" y="25" width="741" height="185" fill="#f2f2f2" />
        <path d="M1262 110H1828" stroke="#222" strokeWidth="50" strokeDasharray="24 9" />
        <rect x="1262" y="144" width="566" height="14" fill="#111" />
        <path d="M1262 190H1985" stroke="#777" strokeWidth="22" strokeDasharray="30 28" />
        <rect x="1258" y="207" width="741" height="1013" fill="#d6d4ce" />
        <rect x="1312" y="282" width="453" height="124" fill="#8f93d2" />
        <rect x="1867" y="282" width="132" height="124" fill="#7fb89f" />
        <path d="M1340 310H1730M1340 360H1560" stroke="#223" strokeWidth="26" strokeDasharray="18 5" />
        <path d="M1807 249C1860 260 1800 340 1720 390C1650 440 1580 490 1654 498" fill="none" stroke="#444" strokeWidth="9" />
        {rects(thumbViolet, "#8f93d2")}
        {rects(thumbGreen, "#bbe0c2")}
        {rects(thumbBlue, "#a8d2ea")}
        <rect x="1639" y="518" width="224" height="214" fill="#9d9daa" />
        {rects(thumbPanels, "#f2e86e")}
        <path d="M1738 1133C1800 1130 1825 1115 1850 1085C1885 1040 1915 990 1950 965C1965 952 1985 942 1999 937" fill="none" stroke="#444" strokeWidth="9" />
        <rect x="1258" y="1220" width="741" height="29" fill="#e8e8e8" />
        <rect x="1960" y="1155" width="28" height="40" fill="none" stroke="#666" strokeWidth="6" />
      </svg>
    </div>
  );
}

function Canvas() {
  return (
    <div className="relative flex-1 overflow-hidden bg-[#dcdad4]">
      {/* canvas grid, seen through the groups */}
      <svg className="absolute inset-0 h-full w-full" viewBox="1258 207 741 1013">
        <g stroke="#b4b2ac" strokeWidth="1.2">
          {vLines.map((x) => <line key={x} x1={x} x2={x} y1="207" y2="1220" />)}
        </g>
        <g stroke="#c8c6c0" strokeWidth="2">
          {hLines.map((y) => <line key={y} x1="1258" x2="1999" y1={y} y2={y} />)}
        </g>
      </svg>

      {/* groups */}
      <div className="absolute left-[54px] top-[75px] h-[124px] w-[453px] border border-[#a8a9cf] bg-[#8a8dd0]/85 pl-[20px] pt-[12px] text-[36.8px] leading-[45px] text-black">
        <p className="whitespace-nowrap">2. Create selection set(s)</p>
        <p className="whitespace-nowrap">of points on grid</p>
      </div>
      <div className="absolute left-[609px] top-[75px] h-[124px] w-[140px] border border-[#94c2ac] bg-[#66ad8f]/80 pl-[20px] pt-[12px] text-[36.8px] leading-[45px] text-black">
        <p className="whitespace-nowrap">3. Join</p>
        <p className="whitespace-nowrap">selected</p>
      </div>

      <div className="absolute left-[68px] top-[300px] h-[63px] w-[104px] border border-[#a8a9cf] bg-[#8a8dd0]/85" />
      <div className="absolute left-[67px] top-[391px] h-[64px] w-[104px] border border-[#a8a9cf] bg-[#8a8dd0]/85" />
      <div className="absolute left-[68px] top-[483px] h-[66px] w-[104px] border border-[#a8a9cf] bg-[#8a8dd0]/85" />
      <div className="absolute left-[182px] top-[301px] h-[62px] w-[176px] border border-[#a8a9cf] bg-[#8a8dd0]/85" />
      <div className="absolute left-[182px] top-[393px] h-[62px] w-[176px] border border-[#a8a9cf] bg-[#8a8dd0]/85" />
      <div className="absolute left-[182px] top-[483px] h-[63px] w-[176px] border border-[#a8a9cf] bg-[#8a8dd0]/85" />

      <div className="absolute left-[615px] top-[322px] h-[53px] w-[89px] border border-[#a4c9ab] bg-[#b3e2bc]/90" />
      <div className="absolute left-[614px] top-[390px] h-[53px] w-[92px] border border-[#a4c9ab] bg-[#b3e2bc]/90" />
      <div className="absolute left-[614px] top-[460px] h-[53px] w-[92px] border border-[#a4c9ab] bg-[#b3e2bc]/90" />
      <div className="absolute left-[607px] top-[553px] h-[59px] w-[109px] border border-[#a4c9ab] bg-[#b3e2bc]/90" />
      <div className="absolute left-[607px] top-[643px] h-[60px] w-[104px] border border-[#a4c9ab] bg-[#b3e2bc]/90" />

      <div className="absolute left-[75px] top-[761px] h-[60px] w-[105px] border border-[#8fb3cc] bg-[#7fc0e8]" />
      <div className="absolute left-[194px] top-[765px] h-[59px] w-[104px] border border-[#9fb7c5] bg-[#b4d1e2]/90" />
      <div className="absolute left-[312px] top-[766px] h-[60px] w-[105px] border border-[#9fb7c5] bg-[#b4d1e2]/90" />
      <div className="absolute left-[431px] top-[766px] h-[60px] w-[105px] border border-[#9fb7c5] bg-[#b4d1e2]/90" />
      <div className="absolute left-[556px] top-[766px] h-[60px] w-[104px] border border-[#9fb7c5] bg-[#b4d1e2]/90" />
      <div className="absolute left-[75px] top-[864px] h-[60px] w-[105px] border border-[#9fb7c5] bg-[#b4d1e2]/90" />
      <div className="absolute left-[189px] top-[867px] h-[59px] w-[105px] border border-[#9fb7c5] bg-[#b4d1e2]/90" />
      <div className="absolute left-[391px] top-[896px] h-[60px] w-[104px] border border-[#9fb7c5] bg-[#b4d1e2]/90" />
      <div className="absolute left-[587px] top-[870px] h-[60px] w-[104px] border border-[#9fb7c5] bg-[#b4d1e2]/90" />
      <div className="absolute left-[726px] top-[767px] h-[123px] w-[15px] bg-[#6d9cb8]" />

      {/* tooltips */}
      <Tooltip cls="left-[54px] top-[269px] w-[131px]" text="Selection curve 1" />
      <Tooltip cls="left-[52px] top-[361px] w-[132px]" text="Selection curve 2" />
      <Tooltip cls="left-[53px] top-[453px] w-[132px]" text="Selection curve 3" />
      <Tooltip cls="left-[614px] top-[521px] w-[94px]" text="Select none" />
      <Tooltip cls="left-[622px] top-[612px] w-[75px]" text="Select all" />
      <Tooltip cls="left-[94px] top-[731px] w-[66px]" text="No filter" />
      <Tooltip cls="left-[200px] top-[734px] w-[92px]" text="Plain weave" />
      <Tooltip cls="left-[332px] top-[736px] w-[65px]" text="2x1 twill" />
      <Tooltip cls="left-[422px] top-[736px] w-[121px]" text="3x1 broken twill" />
      <Tooltip cls="left-[550px] top-[736px] w-[115px]" text="10x10 gridlines" />
      <Tooltip cls="left-[78px] top-[833px] w-[99px]" text="6 shaft satin" />
      <Tooltip cls="left-[192px] top-[836px] w-[99px]" text="8 shaft satin" />
      <Tooltip cls="left-[301px] top-[866px] w-[284px]" text="8 shaft satin with 1 empty row/column" />
      <Tooltip cls="left-[563px] top-[839px] w-[152px]" text="10x10 checkerboard" />

      {/* wires */}
      <svg className="absolute inset-0 h-full w-full" viewBox="1258 207 741 1013">
        {wires.map((w) => (
          <path key={w.d} d={w.d} fill="none" stroke="#55534f" strokeWidth={w.w} strokeDasharray={w.dash} strokeOpacity="0.95" />
        ))}
      </svg>

      {/* components */}
      <Pill cls="left-[22px] top-[14px] h-[24px] w-[95px]" text="Extent Y" />
      <Pill cls="left-[372px] top-[30px] h-[25px] w-[177px]" text="All points on all layers" />
      <Pill cls="left-[396px] top-[279px] h-[24px] w-[181px]" text="All points on all layers" />
      <Pill cls="left-[630px] top-[337px] h-[24px] w-[59px]" text="Set 1" />
      <Pill cls="left-[628px] top-[405px] h-[24px] w-[64px]" text="Set 2" />
      <Pill cls="left-[628px] top-[475px] h-[23px] w-[64px]" text="Set 3" />

      <SpiralNode cls="left-[83px] top-[314px] h-[36px] w-[75px]" />
      <SpiralNode cls="left-[81px] top-[406px] h-[36px] w-[75px]" />
      <SpiralNode cls="left-[83px] top-[498px] h-[36px] w-[75px]" />
      <ToggleNode cls="left-[197px] top-[316px] h-[33px] w-[147px]" />
      <ToggleNode cls="left-[197px] top-[408px] h-[33px] w-[147px]" />
      <ToggleNode cls="left-[197px] top-[499px] h-[33px] w-[147px]" />
      <MainComponent />

      <Panel cls="left-[622px] top-[568px] h-[29px] w-[78px]" text="{99;?}[?]" bright />
      <Panel cls="left-[622px] top-[658px] h-[30px] w-[74px]" text="{?;?}[?]" bright />
      <Panel cls="left-[90px] top-[776px] h-[30px] w-[75px]" text="{?;?}[?]" bright />
      <Panel cls="left-[209px] top-[780px] h-[30px] w-[74px]" />
      <Panel cls="left-[328px] top-[781px] h-[30px] w-[74px]" />
      <Panel cls="left-[446px] top-[781px] h-[30px] w-[74px]" />
      <Panel cls="left-[570px] top-[781px] h-[30px] w-[74px]" />
      <Panel cls="left-[90px] top-[879px] h-[30px] w-[75px]" />
      <Panel cls="left-[204px] top-[882px] h-[30px] w-[75px]" />
      <Panel cls="left-[406px] top-[911px] h-[30px] w-[74px]" />
      <Panel cls="left-[602px] top-[885px] h-[30px] w-[75px]" />

      {/* bottom-left widget bar */}
      <div className="absolute bottom-0 left-0 flex h-[31px] w-[100px] items-center gap-[3px] border-y-2 border-r-2 border-[#444] bg-linear-to-b from-[#bcbcbc] to-[#8c8c8c] pl-[2px]">
        <svg width="27" height="26" viewBox="0 0 27 26">
          <rect x="0.500" y="0.500" width="26" height="25" rx="3" fill="#f3c33e" stroke="#777" />
          <path d="M5 21l3-8 3 7 3-12 2 13 3-10 3 9" fill="none" stroke="#b8791a" strokeWidth="2" />
        </svg>
        <svg width="27" height="26" viewBox="0 0 27 26">
          <rect x="0.500" y="0.500" width="26" height="25" rx="3" fill="#b9b9b9" stroke="#444" />
          <path d="M13.500 4v9M9 9l4.500 5 4.500-5zM5 18h17" stroke="#111" strokeWidth="2" />
          <path d="M6 19v4M10 19v4M14 19v4M18 19v4M21 19v4" stroke="#111" />
        </svg>
        <div className="relative flex h-[26px] w-[28px] flex-col items-center text-[9px] font-bold leading-[10px] text-[#444]">
          <span className="tracking-[1px]">XYZ</span>
          <svg width="22" height="14" viewBox="0 0 22 14">
            <path d="M5 0l5 7M17 0l-6 7M11 0v6" stroke="#999" strokeDasharray="1.500 1" />
            <path d="M4 10h14M15 7l5 3-5 3z" stroke="#111" strokeWidth="1.5" />
          </svg>
        </div>
      </div>
    </div>
  );
}

function GrasshopperWindow() {
  const tabs = [
    { t: "Maths", c: "ml-[6px]" },
    { t: "Sets", c: "ml-[15px]" },
    { t: "Vector", c: "ml-[14px]" },
    { t: "Curve", c: "ml-[13.500px]" },
    { t: "Surface", c: "ml-[13.500px]" },
    { t: "Mesh", c: "ml-[13.500px]" },
    { t: "Intersect", c: "ml-[13.500px]" },
    { t: "Transform", c: "ml-[13.500px]" },
    { t: "Display", c: "ml-[13.500px]" },
    { t: "PanelingTools", c: "ml-[13.500px]" },
    { t: "Kangaroo2", c: "ml-[12px]" },
  ];
  return (
    <div className="relative z-10 flex h-full flex-1 flex-col rounded-t-[5px] bg-[#ececec] shadow-[-3px_0_8px_rgba(0,0,0,0.3)]">
      <div className="relative flex h-[25px] shrink-0 items-center justify-center rounded-t-[5px] bg-linear-to-b from-[#e6e6e6] to-[#d2d2d2] text-[14.5px] text-[#4a4a4a]">
        <div className="absolute left-[9px] flex gap-[8px]">
          <span className="h-[14px] w-[14px] rounded-full bg-[#ec6a5e]" />
          <span className="h-[14px] w-[14px] rounded-full bg-[#f4bf4f]" />
          <span className="h-[14px] w-[14px] rounded-full bg-[#61c554]" />
        </div>
        <span className="-ml-[10px]">Grasshopper - Woven Sketching v2*</span>
      </div>
      <div className="flex h-[25px] shrink-0 items-center bg-[#ececec] pl-[2px] text-[13px] text-[#666]">
        <span className="flex h-[25px] w-[57px] items-center justify-center rounded-t-[5px] border-x border-t border-[#bbb] bg-white text-[#111]">Params</span>
        {tabs.map((x) => (
          <span key={x.t} className={x.c}>{x.t}</span>
        ))}
      </div>
      <Ribbon />
      <div className="h-[12px] shrink-0 bg-[#f3f3f3]" />
      <GhToolbar />
      <Canvas />
      <div className="flex h-[29px] shrink-0 items-center bg-[#ececec] pl-[2px] text-[14px] text-[#333]">
        <svg width="22" height="24" viewBox="0 0 22 24">
          <ellipse cx="11" cy="12" rx="9" ry="11" fill="#2f55c4" stroke="#14246a" />
          <text x="11" y="18" textAnchor="middle" fontSize="16" fontWeight="700" fill="#fff" fontFamily="Liberation Sans, sans-serif">0</text>
        </svg>
        <span className="ml-[1px] whitespace-nowrap">Autosave complete (13 seconds ago)</span>
        <span className="ml-auto mr-[78px] text-[14px] text-[#555]">1.0.0007</span>
      </div>
      <Thumbnail />
    </div>
  );
}

function MenuBar() {
  const items = [
    { t: "File", c: "ml-[21px]" },
    { t: "Edit", c: "ml-[19px]" },
    { t: "View", c: "ml-[23px]" },
    { t: "Display", c: "ml-[21px]" },
    { t: "Solution", c: "ml-[20px]" },
    { t: "Window", c: "ml-[21px]" },
    { t: "Help", c: "ml-[20px]" },
  ];
  return (
    <div className="relative z-20 flex h-[25px] shrink-0 items-center border-b border-[#666] bg-linear-to-r from-[#b2bbd7] to-[#bfc8e1] text-[16px] text-[#111]">
      <FaApple className="ml-[23px]" size={17} color="#111" />
      <span className="ml-[21px]">Grasshopper</span>
      {items.map((x) => (
        <span key={x.t} className={x.c}>{x.t}</span>
      ))}
      <span className="ml-[1039px] flex h-[20px] w-[17px] items-center justify-center rounded-full border border-[#8a93ad] text-[14px] text-[#8a93ad]">d</span>
      <svg className="ml-[13px]" width="18" height="17" viewBox="0 0 18 17">
        <rect width="18" height="17" fill="#f4f4f4" />
        <path d="M0 1.500h18M0 4.500h18M0 7.500h18M0 10.500h18M0 13.500h18M0 16h18" stroke="#c84a4a" strokeWidth="1.4" />
        <rect width="9" height="9" fill="#2c3f8f" />
      </svg>
      <Wifi className="ml-[18px]" size={21} color="#111" strokeWidth={2} />
      <span className="ml-[14px] text-[14px]">10%</span>
      <Battery className="ml-[7px]" size={24} color="#222" strokeWidth={1.4} />
      <span className="ml-[19px]">Tue 9:23 PM</span>
      <Search className="ml-[28px]" size={18} color="#111" strokeWidth={2} />
      <svg className="ml-[15px]" width="22" height="14" viewBox="0 0 22 14">
        <path d="M6 2h16M6 7h16M6 12h16M0 2h3M0 7h3M0 12h3" stroke="#111" strokeWidth="2" />
      </svg>
    </div>
  );
}

export default function App() {
  return (
    <div className="flex h-[1249px] w-[1999px] flex-col overflow-hidden bg-[#333] font-['Liberation_Sans',sans-serif]">
      <MenuBar />
      <div className="flex min-h-0 flex-1">
        <RhinoWindow />
        <GrasshopperWindow />
      </div>
    </div>
  );
}
